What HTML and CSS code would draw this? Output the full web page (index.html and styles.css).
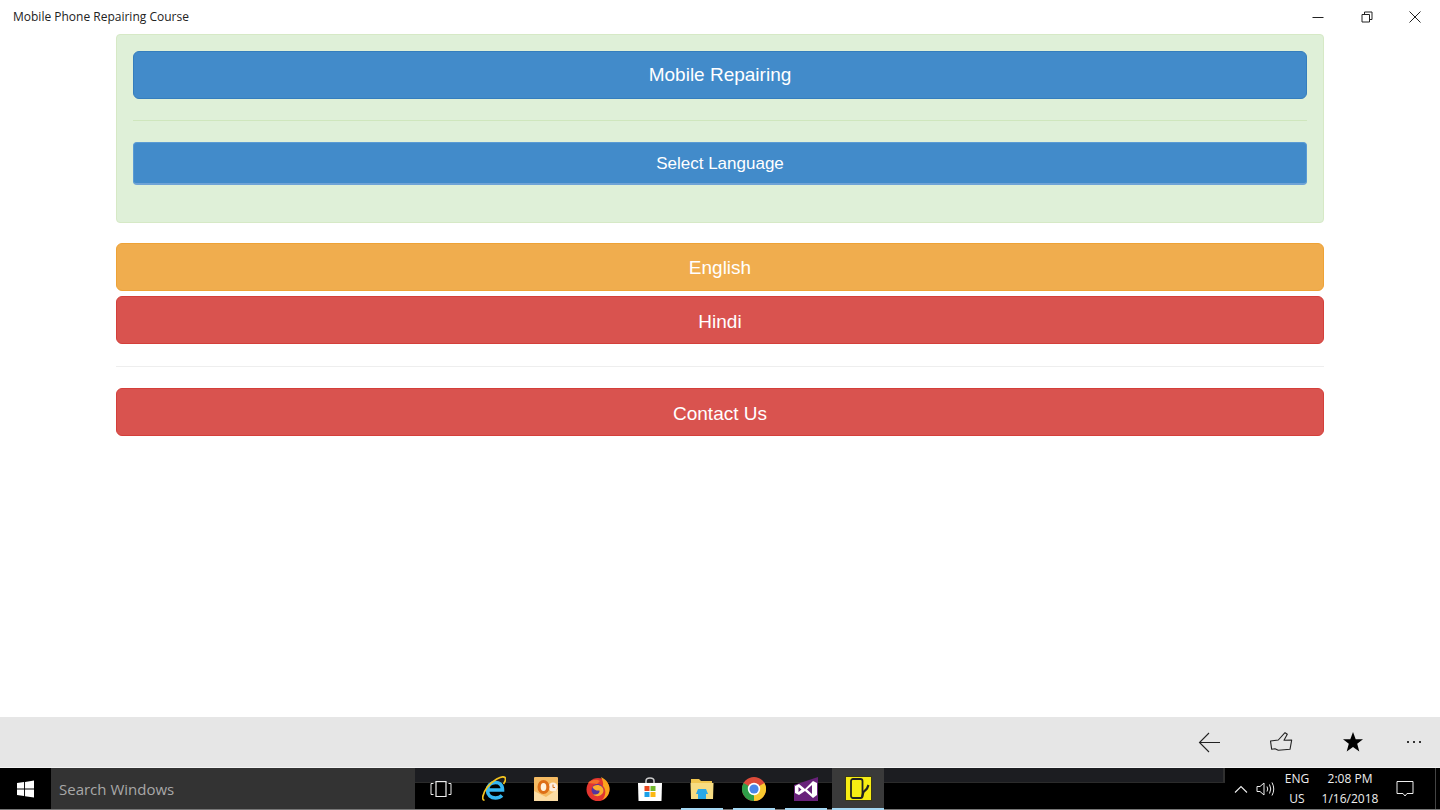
FILE: index.html
```html
<!DOCTYPE html>
<html lang="en">
<head>
<meta charset="utf-8">
<title>Mobile Phone Repairing Course</title>
<link rel="stylesheet" href="styles.css">
</head>
<body>
<div class="window">
  <header class="titlebar">
    <span class="title">Mobile Phone Repairing Course</span>
    <div class="controls">
      <span class="ctl"><svg width="12" height="12" viewBox="0 0 12 12"><path d="M0.500 6.500H11.500" stroke="#222" fill="none"/></svg></span>
      <span class="ctl"><svg width="12" height="12" viewBox="0 0 12 12"><path d="M1 3.500H8.500V11H1ZM3.500 3.500V1H11V8.500H8.500" stroke="#222" fill="none"/></svg></span>
      <span class="ctl"><svg width="12" height="12" viewBox="0 0 12 12"><path d="M0.500 0.500L11.500 11.500M11.500 0.500L0.500 11.500" stroke="#222" fill="none"/></svg></span>
    </div>
  </header>
  <main class="content">
    <section class="well">
      <a class="btn btn-lg blue">Mobile Repairing</a>
      <hr class="rule rule-green">
      <a class="btn btn-md blue blue-sel">Select Language</a>
    </section>
    <a class="btn btn-lg orange">English</a>
    <a class="btn btn-lg red hindi">Hindi</a>
    <hr class="rule rule-grey">
    <a class="btn btn-lg red">Contact Us</a>
  </main>
  <div class="appbar">
    <svg class="ab" width="23" height="21" viewBox="0 0 23 21"><path d="M22 10.500H1.500M11 1L1.500 10.500L11 20" stroke="#222" stroke-width="1.100" fill="none"/></svg>
    <svg class="ab" width="23" height="20" viewBox="0 0 23 20"><path d="M0.500 9L8.300 8L15 0.700L17.300 2.300L14 8.300L21.700 8L20 17.300L8.300 18.300L5 16.700L1.700 17.300Z" stroke="#222" stroke-width="1.100" fill="none" stroke-linejoin="round"/></svg>
    <svg class="ab ab-last" width="22" height="22" viewBox="0 0 22 22"><path d="M11 1L13.700 8.200H21L15.200 12.800L17.300 20.500L11 16L4.700 20.500L6.800 12.800L1 8.200H8.300Z" fill="#000"/></svg>
    <svg class="more" width="16" height="4" viewBox="0 0 16 4"><path d="M1 1H3V3H1ZM7 1H9V3H7ZM13 1H15V3H13Z" fill="#333"/></svg>
  </div>
  <footer class="taskbar">
    <div class="band"></div>
    <span class="start"><svg width="17" height="18" viewBox="0 0 18 18"><path d="M0 2.700L7.500 1.600V8.500H0ZM8.500 1.500L18 0V8.500H8.500ZM0 9.500H7.500V16.500L0 15.400ZM8.500 9.500H18V18L8.500 16.600Z" fill="#fff"/></svg></span>
    <span class="search">Search Windows</span>
    <div class="apps">
      <span class="app app-view"><svg width="22" height="18" viewBox="0 0 22 18"><path d="M6 1.500H16V16.500H6Z" stroke="#eee" stroke-width="1.200" fill="none"/><path d="M3.500 3.500H1V14.500H3.500M18.500 3.500H21V14.500H18.500" stroke="#eee" fill="none"/></svg></span>
      <span class="app"><svg width="24" height="26" viewBox="0 0 24 26"><path d="M6.500 14H20.500C20.500 8.500 17 6.500 13.500 6.500C8.500 6.500 5.500 10 5.500 14.500C5.500 19 9 22 13.500 22C16.500 22 18.500 21 20 19.500" stroke="#36b8f2" stroke-width="3.600" fill="none"/><path d="M2.500 24C-1 24.500 1 17 5 11.500C10 4.500 20 -1 23 1.500C24 3 23 6 21.500 8" stroke="#f2c21f" stroke-width="1.700" fill="none"/></svg></span>
      <span class="app"><svg width="24" height="24" viewBox="0 0 24 24"><rect width="24" height="24" rx="1" fill="#f5bb63"/><path d="M0 14L12 20L24 12V24H0Z" fill="#fbdca4"/><circle cx="19" cy="10" r="4.500" fill="#fdeede"/><path d="M19 7.500V10.500H21" stroke="#d9711a" fill="none"/><ellipse cx="9.500" cy="10" rx="6" ry="7" fill="#dd6f17"/><ellipse cx="9.500" cy="10" rx="2.800" ry="4" fill="#fff3dd"/></svg></span>
      <span class="app"><svg width="24" height="24" viewBox="0 0 24 24"><circle cx="12" cy="12.500" r="11.500" fill="#e3352f"/><path d="M15 0C21 3 24 8 23.500 13C23 18 20 21.500 16 23C20 19 20.500 13 17 9C17.500 6 16.500 3 15 0Z" fill="#fba51d"/><path d="M2 6C6 2 11 2 14 4L11 7Z" fill="#f4702a"/><circle cx="11.500" cy="13" r="6" fill="#56349e"/><path d="M6.500 10C10 6 17.500 8 17.500 13.500C17.500 18.500 11 21 7 17.500C11 18 14 16.500 13.500 13.500C11 14 8 13 6.500 10Z" fill="#fdae2c"/></svg></span>
      <span class="app"><svg width="26" height="24" viewBox="0 0 26 24"><path d="M9 7V4C9 0 17 0 17 4V7" stroke="#ccc" stroke-width="1.500" fill="none"/><path d="M1 6H25L24.500 24H1.500Z" fill="#fff"/><rect x="7.500" y="9" width="5" height="5" fill="#e8471f"/><rect x="13.500" y="9" width="5" height="5" fill="#72b82c"/><rect x="7.500" y="15" width="5" height="5" fill="#1ca0e8"/><rect x="13.500" y="15" width="5" height="5" fill="#fcb813"/></svg></span>
      <span class="app running"><svg width="24" height="20" viewBox="0 0 24 20"><path d="M1 0H9L11 2H22V5H1Z" fill="#f1c650"/><path d="M0.500 4H23.500L23 20H1Z" fill="#f7dc82"/><path d="M6 15L8 10H16L18 15H16V20H8V15Z" fill="#2ba8e6"/></svg></span>
      <span class="app running"><svg width="24" height="24" viewBox="0 0 24 24"><circle cx="12" cy="12" r="12" fill="#dd4b3a"/><path d="M12 12L22.400 6A12 12 0 0 1 12 24Z" fill="#f9c92f"/><path d="M12 12L12 24A12 12 0 0 1 1.600 6Z" fill="#2f9e48"/><circle cx="12" cy="12" r="6.200" fill="#fff"/><circle cx="12" cy="12" r="4.600" fill="#4a86e8"/></svg></span>
      <span class="app running"><svg width="24" height="24" viewBox="0 0 24 24"><path d="M0 8L15 3L24 0V24H0Z" fill="#68217a"/><path fill-rule="evenodd" d="M1 9L5 7L11 12L19 4L23 6V18L19 21L11 14L5 18L1 16ZM4.500 10V15L7.500 12.500ZM18 8L13 12.500L18 17Z" fill="#fff"/></svg></span>
      <span class="app running active"><svg width="27" height="25" viewBox="0 0 27 25"><rect x="0.500" y="0.500" width="26" height="24" fill="#f7ec13" stroke="#3a3a1a"/><rect x="6" y="3" width="11.500" height="19" rx="2" fill="none" stroke="#222" stroke-width="1.800"/><path d="M17 21L18.500 16L22 12.500L23.500 9" stroke="#222" stroke-width="2.200" fill="none"/></svg></span>
    </div>
    <div class="tray">
      <svg width="14" height="8" viewBox="0 0 14 8"><path d="M1 7.500L7 1.500L13 7.500" stroke="#eee" stroke-width="1.100" fill="none"/></svg>
      <svg class="vol" width="20" height="16" viewBox="0 0 20 16"><path d="M1 5.500H4L8 2V14L4 10.500H1Z M11 5.500Q12.500 8 11 10.500M13.500 3.500Q16 8 13.500 12.500M16 1.500Q19.500 8 16 14.500" stroke="#eee" fill="none"/></svg>
      <span class="lang">ENG<br>US</span>
      <span class="clock">2:08 PM<br>1/16/2018</span>
      <svg class="notif" width="18" height="18" viewBox="0 0 18 18"><path d="M1 1.500H17V13.500H11L9 16L7 13.500H1Z" stroke="#eee" fill="none"/></svg>
      <span class="desk"></span>
    </div>
  </footer>
</div>
</body>
</html>
```
FILE: styles.css
```css
* { box-sizing: border-box; }
html, body { margin: 0; padding: 0; height: 100%; }
body { font-family: "Liberation Sans", Arial, sans-serif; background: #fff; overflow: hidden; }
.window { width: 1440px; height: 810px; display: flex; flex-direction: column; }

.titlebar { height: 32px; margin-bottom: 2px; flex: none; display: flex; align-items: center; justify-content: space-between; padding: 0 0 0 13px; }
.title { font-family: "Open Sans", "Noto Sans", sans-serif; font-size: 12px; color: #222; }
.controls { display: flex; padding: 1px 0.5px 0 0; }
.ctl { width: 48.500px; height: 32px; display: flex; align-items: center; justify-content: center; }

.content { flex: 1; padding: 0 116px; display: flex; flex-direction: column; min-height: 0; }
.well { height: 189px; padding: 16px 16px 0; background: #dff0d8; border: 1px solid #d6e9c6; border-radius: 4px; display: flex; flex-direction: column; margin-bottom: 20px; flex: none; }
.btn { display: flex; align-items: center; justify-content: center; color: #fff; border: 1px solid transparent; border-radius: 6px; flex: none; }
.btn-lg { height: 48px; font-size: 19px; }
.btn-md { height: 43px; font-size: 17px; border-radius: 4px; }
.blue { background: #428bca; border-color: #357ebd; }
.blue-sel { border-color: #5a9bd4; border-bottom: 2px solid #6fa3d6; padding-top: 2px; }
.orange { background: #f0ad4e; border-color: #eea236; padding-top: 2px; }
.red { background: #d9534f; border-color: #d43f3a; padding-top: 4px; }
.hindi { margin-top: 5px; }
.rule { width: 100%; margin: 0; border: 0; height: 1px; flex: none; }
.rule-green { background: #cfe6bd; margin: 21px 0; }
.rule-grey { background: #eee; margin: 22px 0 21px; }

.appbar { height: 51px; flex: none; background: #e6e6e6; display: flex; align-items: center; justify-content: flex-end; border-bottom: 1px solid #f4f4f4; }
.appbar .ab { margin-right: 49px; }
.appbar .ab-last { margin-right: 42px; }
.more { margin-right: 18px; }

.taskbar { height: 42px; flex: none; background: #000; display: flex; align-items: stretch; border-bottom: 1px solid #777; color: #eee; position: relative; }
.band { position: absolute; left: 415px; top: 0; width: 810px; height: 15px; background: #1c1d21; border-right: 2px solid #303030; border-bottom: 1px solid #2b2b2b; }
.start { width: 51px; display: flex; align-items: center; justify-content: center; }
.search { width: 364px; background: #333; color: #a8a8a8; font-family: "Open Sans", "Noto Sans", sans-serif; font-size: 15px; display: flex; align-items: center; padding-left: 8px; }
.apps { display: flex; position: relative; }
.app { width: 52px; display: flex; align-items: center; justify-content: center; position: relative; }
.app-view { width: 51px; margin-right: 2px; }
.active { background: #3a3a3a; }
.running::after { content: ""; position: absolute; left: 0; right: 0; bottom: -1px; height: 2px; margin: 0 5px; background: #a5d8f3; }
.active::after { margin: 0; }
.tray { flex: 1; display: flex; align-items: center; font-family: "Open Sans", "Noto Sans", sans-serif; font-size: 12px; text-align: center; justify-content: flex-end; position: relative; }
.vol { margin: 0 0 0 8px; }
.lang { margin-left: 7px; line-height: 20px; width: 28px; }
.clock { margin-left: 10px; line-height: 20px; width: 58px; }
.notif { margin: 0 21px 0 17px; }
.desk { width: 1px; height: 100%; background: #444; margin-right: 4px; }
```
